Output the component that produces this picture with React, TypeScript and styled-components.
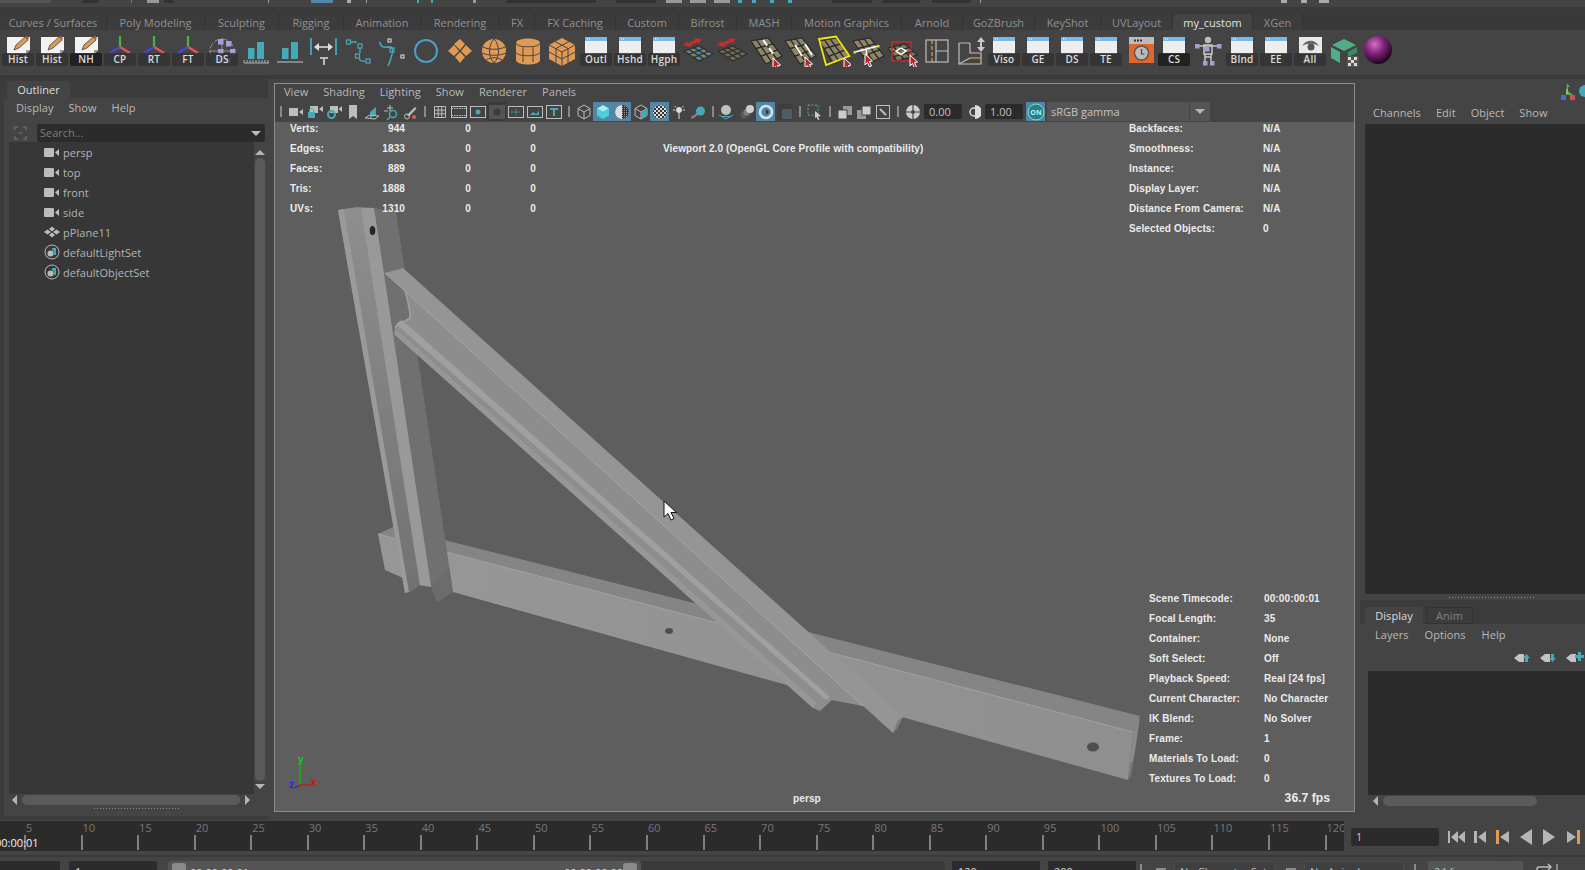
import React from "react";
import styled, { createGlobalStyle } from "styled-components";

const GlobalStyle = createGlobalStyle`
  html, body { margin: 0; padding: 0; background: #444; overflow: hidden; }
  * { box-sizing: border-box; }
`;

const UI_FONT = `"Open Sans", "Noto Sans", sans-serif`;
const HUD_FONT = `"Liberation Sans", Arial, sans-serif`;
const TEAL = "#45a9b8";
const ORANGE = "#e09a55";

const Page = styled.div`
  width: 1585px;
  height: 870px;
  overflow: hidden;
  display: flex;
  flex-direction: column;
  background: #444;
  font-family: ${UI_FONT};
  font-size: 11px;
  color: #bbb;
`;

/* ---- clipped status line ---- */
const StatusStrip = styled.div`
  flex: none;
  height: 8px;
  display: flex;
  align-items: flex-start;
  background: #444;
  border-bottom: 1px solid #3a3a3a;
`;
const StatusBit = styled.div<{ $ml: number; $w: number; $c: string }>`
  margin-left: ${(p) => p.$ml}px;
  width: ${(p) => p.$w}px;
  height: 3px;
  background: ${(p) => p.$c};
`;
const StatusGap = styled.div`
  flex: none;
  height: 6px;
  background: #3a3a3a;
`;

/* ---- shelf tabs ---- */
const TabStrip = styled.div`
  flex: none;
  height: 16px;
  display: flex;
  background: #383838;
`;
const ShelfTab = styled.div<{ $w: number; $active?: boolean }>`
  width: ${(p) => p.$w}px;
  display: flex;
  align-items: center;
  justify-content: center;
  background: ${(p) => (p.$active ? "#444" : "#3c3c3c")};
  color: ${(p) => (p.$active ? "#e2e2e2" : "#909090")};
  border-right: 1px solid #333;
  border-radius: 3px 3px 0 0;
  font-size: 11px;
  white-space: nowrap;
`;

/* ---- shelf ---- */
const Shelf = styled.div`
  flex: none;
  height: 45px;
  display: flex;
  padding-left: 1px;
  background: #444;
`;
const ShelfItem = styled.div`
  position: relative;
  flex: none;
  width: 34px;
  height: 45px;
  padding-top: 3px;
  svg { display: block; }
`;
const ShelfLabel = styled.div<{ $dark?: boolean }>`
  position: absolute;
  left: 1px;
  top: 23px;
  width: 32px;
  height: 13px;
  line-height: 13px;
  text-align: center;
  border-radius: 2px;
  background: ${(p) => (p.$dark ? "rgba(30,30,30,.9)" : "rgba(50,50,50,.85)")};
  color: #dcdcdc;
  font-size: 10px;
  font-weight: 600;
  letter-spacing: 0.2px;
`;
const ShelfGap = styled.div`
  flex: none;
  height: 4px;
  background: #3a3a3a;
`;

/* ---- main area ---- */
const Main = styled.div`
  flex: none;
  height: 741px;
  display: flex;
  background: #444;
`;

/* outliner */
const OutlinerPanel = styled.div`
  flex: none;
  width: 268px;
  display: flex;
  flex-direction: column;
  padding-left: 4px;
  background: #3c3c3c;
`;
const PanelTabs = styled.div`
  flex: none;
  height: 19px;
  display: flex;
  align-items: flex-end;
  padding-left: 3px;
`;
const PanelTab = styled.div<{ $w: number; $active?: boolean }>`
  width: ${(p) => p.$w}px;
  height: 17px;
  margin-right: 3px;
  display: flex;
  align-items: center;
  justify-content: center;
  border-radius: 3px 3px 0 0;
  background: ${(p) => (p.$active ? "#444" : "#3c3c3c")};
  color: ${(p) => (p.$active ? "#ddd" : "#808080")};
  box-shadow: ${(p) => (p.$active ? "none" : "inset 0 0 0 1px #333")};
  font-size: 11px;
  letter-spacing: 0.05px;
`;
const PanelBody = styled.div`
  flex: 1;
  min-height: 0;
  display: flex;
  flex-direction: column;
  background: #444;
  margin-bottom: 4px;
  padding-bottom: 4px;
`;
const MenuBar = styled.div<{ $h?: number; $pl: number; $gap: number }>`
  flex: none;
  height: ${(p) => p.$h ?? 20}px;
  display: flex;
  align-items: center;
  gap: ${(p) => p.$gap}px;
  padding-left: ${(p) => p.$pl}px;
  font-size: 11px;
  letter-spacing: 0.05px;
  color: #b9b9b9;
`;
const FilterRow = styled.div`
  flex: none;
  height: 26px;
  display: flex;
  align-items: flex-end;
  padding: 0 1px 0 9px;
  gap: 9px;
  svg { margin-bottom: 1px; }
`;
const SearchField = styled.div`
  position: relative;
  width: 228px;
  height: 18px;
  line-height: 18px;
  padding-left: 3px;
  border-radius: 2px;
  background: #2b2b2b;
  color: #7d7d7d;
  font-size: 11px;
  &::after {
    content: "";
    position: absolute;
    right: 4px;
    top: 7px;
    border: 5px solid transparent;
    border-top: 5px solid #bbb;
    border-bottom: 0;
  }
`;
const ListArea = styled.div`
  flex: 1;
  min-height: 0;
  display: flex;
  margin: 0 2px 0 5px;
`;
const ListColumn = styled.div`
  flex: 1;
  min-width: 0;
  display: flex;
  flex-direction: column;
  background: #373737;
`;
const TreeList = styled.div`
  flex: 1;
`;
const TreeRow = styled.div`
  height: 20px;
  display: flex;
  align-items: center;
  padding-left: 35px;
  gap: 3px;
  font-size: 11px;
  letter-spacing: 0.05px;
  color: #b4b4b4;
  svg { flex: none; }
`;
const VScroll = styled.div`
  flex: none;
  width: 12px;
  display: flex;
  flex-direction: column;
  align-items: center;
  background: #444;
  padding-bottom: 16px;
`;
const VThumb = styled.div`
  flex: 1;
  width: 10px;
  border-radius: 5px;
  background: #5a5a5a;
`;
const ScrollSpace = styled.div<{ $h: number }>`
  flex: none;
  height: ${(p) => p.$h}px;
`;
const Arrow = styled.div<{ $dir: "up" | "down" | "left" | "right"; $size?: number; $c?: string }>`
  flex: none;
  width: 0;
  height: 0;
  border: ${(p) => p.$size ?? 5}px solid transparent;
  ${(p) => {
    const c = p.$c ?? "#b5b5b5";
    if (p.$dir === "up") return `border-bottom-color:${c};border-top-width:0;`;
    if (p.$dir === "down") return `border-top-color:${c};border-bottom-width:0;`;
    if (p.$dir === "left") return `border-right-color:${c};border-left-width:0;`;
    return `border-left-color:${c};border-right-width:0;`;
  }}
`;
const HScroll = styled.div<{ $pad?: number }>`
  flex: none;
  height: 11px;
  display: flex;
  align-items: center;
  gap: 5px;
  padding: 0 ${(p) => p.$pad ?? 3}px;
  background: #444;
`;
const HThumb = styled.div<{ $w: number }>`
  flex: none;
  width: ${(p) => p.$w}px;
  height: 10px;
  border-radius: 5px;
  background: #5a5a5a;
`;
const DragDots = styled.div<{ $w: number; $ml: number }>`
  flex: none;
  height: 1px;
  width: ${(p) => p.$w}px;
  margin-left: ${(p) => p.$ml}px;
  background: repeating-linear-gradient(90deg, #8a8a8a 0 1px, transparent 1px 3px);
`;
const DragRow = styled.div<{ $h: number }>`
  flex: none;
  height: ${(p) => p.$h}px;
  display: flex;
  align-items: center;
`;

/* viewport pane */
const ViewPane = styled.div`
  flex: none;
  width: 1081px;
  height: 729px;
  margin: 4px 5px 0 6px;
  display: flex;
  flex-direction: column;
  border: 1px solid #8c8c8c;
  background: #444;
`;
const ViewToolbar = styled.div`
  flex: none;
  height: 23px;
  padding-top: 2px;
  display: flex;
  align-items: center;
  svg { display: block; flex: none; }
`;
const ToolSlot = styled.div<{ $active?: boolean; $sel?: boolean; $ml?: number }>`
  flex: none;
  width: 19px;
  height: 19px;
  margin-left: ${(p) => p.$ml ?? 0}px;
  display: flex;
  align-items: center;
  justify-content: center;
  background: ${(p) => (p.$active ? "#5285a6" : p.$sel ? "#3a3a3a" : "transparent")};
`;
const ToolHandle = styled.div`
  flex: none;
  width: 11px;
  height: 17px;
  display: flex;
  justify-content: center;
  &::before {
    content: "";
    width: 2px;
    height: 100%;
    background: linear-gradient(#444 0 3px, #8a8a8a 3px 14px, #444 14px);
  }
`;
const ToolField = styled.div`
  flex: none;
  width: 38px;
  height: 15px;
  margin: 0 2px;
  padding-left: 5px;
  line-height: 15px;
  border-radius: 2px;
  background: #2b2b2b;
  color: #c2c2c2;
  font-size: 11px;
`;
const GammaBox = styled.div`
  flex: none;
  width: 142px;
  height: 19px;
  line-height: 19px;
  margin-left: 2px;
  padding-left: 4px;
  background: #555;
  color: #c4c4c4;
  font-size: 11px;
`;
const GammaArrow = styled.div`
  flex: none;
  width: 20px;
  height: 19px;
  margin-left: 1px;
  display: flex;
  align-items: center;
  justify-content: center;
  background: #555;
`;
const Viewport = styled.div`
  position: relative;
  flex: 1;
  min-height: 0;
  overflow: hidden;
  background: #5e5e5e;
  font-family: ${HUD_FONT};
  font-size: 10px;
  font-weight: 700;
  letter-spacing: 0.12px;
  color: #ececec;
`;
const ModelSvg = styled.svg`
  position: absolute;
  left: 0;
  top: 0;
`;
const HudBlock = styled.div<{ $x: number; $y: number }>`
  position: absolute;
  left: ${(p) => p.$x}px;
  top: ${(p) => p.$y}px;
  white-space: nowrap;
`;
const HudRow = styled.div`
  display: flex;
  height: 20px;
  line-height: 20px;
`;
const HudCell = styled.div<{ $w: number; $right?: boolean }>`
  flex: none;
  width: ${(p) => p.$w}px;
  text-align: ${(p) => (p.$right ? "right" : "left")};
`;
const FpsText = styled.div`
  position: absolute;
  right: 24px;
  bottom: 6px;
  font-size: 12.2px;
  letter-spacing: 0;
`;
const CameraName = styled.div`
  position: absolute;
  left: 518px;
  bottom: 7px;
`;
const Gizmo = styled.svg`
  position: absolute;
  left: 13px;
  bottom: 20px;
`;
const Pointer = styled.svg`
  position: absolute;
  left: 388px;
  top: 378px;
`;

/* right side panel */
const SidePanel = styled.div`
  flex: 1;
  min-width: 0;
  display: flex;
  flex-direction: column;
`;
const SideTop = styled.div`
  flex: none;
  height: 21px;
  display: flex;
  justify-content: flex-end;
  padding: 4px 0 0;
  svg { display: block; }
`;
const SideDark = styled.div<{ $h: number; $ml: number }>`
  flex: none;
  height: ${(p) => p.$h}px;
  margin-left: ${(p) => p.$ml}px;
  background: #2b2b2b;
`;
const SideTabs = styled.div`
  flex: none;
  height: 24px;
  display: flex;
  align-items: flex-end;
  padding-left: 5px;
  background: #3c3c3c;
`;
const LayerTools = styled.div`
  flex: none;
  height: 26px;
  display: flex;
  align-items: center;
  padding-left: 153px;
  gap: 6px;
  svg { display: block; flex: none; }
`;

/* time slider */
const TimeRow = styled.div`
  flex: none;
  height: 34px;
  margin-top: 1px;
  display: flex;
  background: #444;
`;
const Ruler = styled.div`
  position: relative;
  flex: none;
  width: 1344px;
  height: 30px;
  display: flex;
  padding-left: 24px;
  overflow: hidden;
  background: #2b2b2b;
`;
const RulerCell = styled.div`
  flex: none;
  width: 56.55px;
  display: flex;
  flex-direction: column;
`;
const RulerNum = styled.div`
  height: 14px;
  line-height: 14px;
  padding-left: 2px;
  color: #777;
  font-size: 11px;
  white-space: nowrap;
`;
const RulerTick = styled.div`
  width: 2px;
  height: 15px;
  background: #808080;
`;
const CurrentTime = styled.div`
  position: absolute;
  left: -5px;
  top: 14px;
  color: #f2f2f2;
  font-size: 11px;
`;
const FrameField = styled.div`
  flex: none;
  width: 88px;
  height: 18px;
  line-height: 18px;
  margin: 7px 0 0 7px;
  padding-left: 5px;
  border-radius: 2px;
  background: #2b2b2b;
  color: #c6c6c6;
`;
const Transport = styled.div`
  flex: none;
  display: flex;
  height: 31px;
  padding-left: 6px;
`;
const TransportSlot = styled.div`
  flex: none;
  width: 23.2px;
  display: flex;
  align-items: center;
  justify-content: center;
  svg { display: block; flex: none; }
`;
const SepBand = styled.div`
  flex: none;
  height: 2px;
  background: #3a3a3a;
`;

/* range row */
const RangeRow = styled.div`
  flex: none;
  height: 24px;
  margin-top: 4px;
  display: flex;
  background: #444;
  color: #ddd;
`;
const RangeField = styled.div<{ $w: number; $ml: number }>`
  flex: none;
  width: ${(p) => p.$w}px;
  margin-left: ${(p) => p.$ml}px;
  height: 22px;
  line-height: 22px;
  padding-left: 6px;
  border-radius: 2px;
  background: #2b2b2b;
`;
const RangeTrack = styled.div`
  flex: none;
  width: 777px;
  margin-left: 11px;
  height: 22px;
  display: flex;
  border-radius: 3px;
  background: #3a3a3a;
`;
const RangeBar = styled.div`
  flex: none;
  width: 473px;
  height: 22px;
  display: flex;
  justify-content: space-between;
  padding: 2px 4px;
  border-radius: 3px;
  background: #555;
  line-height: 20px;
`;
const RangeKnob = styled.div`
  flex: none;
  width: 14px;
  height: 14px;
  border-radius: 3px;
  background: #8a8a8a;
`;
const RangeTime = styled.div`
  flex: 1;
  padding: 0 4px;
  display: flex;
  justify-content: flex-start;
`;
const RangeDrop = styled.div<{ $w: number; $ml: number; $light?: boolean }>`
  flex: none;
  width: ${(p) => p.$w}px;
  margin-left: ${(p) => p.$ml}px;
  height: 22px;
  line-height: 22px;
  padding-left: 6px;
  border-radius: 2px;
  background: ${(p) => (p.$light ? "#555" : "#3f3f3f")};
  box-shadow: ${(p) => (p.$light ? "none" : "inset 0 0 0 1px #4d4d4d")};
  color: #bdbdbd;
  white-space: nowrap;
`;
const RangeHandle = styled.div<{ $ml: number }>`
  flex: none;
  width: 2px;
  height: 22px;
  margin: 3px 0 0 ${(p) => p.$ml}px;
  background: #8a8a8a;
`;
const RangeMark = styled.div<{ $ml: number }>`
  flex: none;
  width: 10px;
  height: 2px;
  margin: 7px 0 0 ${(p) => p.$ml}px;
  background: #8a8a8a;
`;
const LoopMark = styled.svg<{ $ml: number }>`
  flex: none;
  margin: 2px 0 0 ${(p) => p.$ml}px;
`;

/* ---- icon drawings ---- */
const Note = () => (
  <svg width="34" height="34" viewBox="0 0 34 34">
    <path d="M6 4h23v13l-4 4H6z" fill="#f2f2f2" />
    <path d="M25 21v-4h4z" fill="#999" />
    <path d="M13 17l2-5 9-8 3 3-9 8z" fill="#d89a55" stroke="#444" strokeWidth=".8" />
    <path d="M24 4l3 3 1-2-2-2z" fill="#c85050" />
  </svg>
);
const AxisIcon = () => (
  <svg width="34" height="34" viewBox="0 0 34 34">
    <path d="M17 3v11" stroke="#3dbb3d" strokeWidth="2.2" />
    <path d="M17 14l10 6" stroke="#e05555" strokeWidth="2.4" />
    <path d="M17 14L7 20" stroke="#4646d8" strokeWidth="2.4" />
  </svg>
);
const DsIcon = () => (
  <svg width="34" height="34" viewBox="0 0 34 34">
    <circle cx="17" cy="18" r="12" fill="none" stroke="#8e8e8e" strokeDasharray="6 2" />
    <path d="M4 18h26M17 5v26" stroke="#8e8e8e" />
    {[[13, 6], [21, 8], [13, 16], [25, 16], [13, 25], [20, 25]].map(([x, y], i) => (
      <rect key={i} x={x} y={y} width="5.5" height="5.5" fill="#a99bdc" />
    ))}
  </svg>
);
const BarsIcon = ({ ruler }: { ruler?: boolean }) => (
  <svg width="34" height="34" viewBox="0 0 34 34">
    <rect x="9" y="15" width="6.5" height="11" fill={TEAL} />
    <rect x="18" y="9" width="7" height="17" fill={TEAL} />
    {ruler ? (
      <path d="M5 30h25M5 27v3M8 27v3M11 27v3M14 27v3M17 27v3M20 27v3M23 27v3M26 27v3M29 27v3" stroke="#b8b8b8" strokeWidth=".9" />
    ) : (
      <path d="M4 29h26" stroke="#c8c8c8" />
    )}
  </svg>
);
const MeasureIcon = () => (
  <svg width="34" height="34" viewBox="0 0 34 34">
    <path d="M4 5v17M29 5v17" stroke={TEAL} strokeWidth="1.8" />
    <path d="M9 14h15" stroke="#ddd" strokeWidth="1.6" />
    <path d="M12 10l-5 4 5 4zM21 10l5 4-5 4z" fill="#ddd" />
    <path d="M13 24h8v2h-3v6h-2v-6h-3z" fill="#bbb" />
  </svg>
);
const CurveIcon = ({ alt }: { alt?: boolean }) => (
  <svg width="34" height="34" viewBox="0 0 34 34" fill="none" stroke={TEAL} strokeWidth="1.2">
    {alt ? (
      <>
        <path d="M5 9c0 7 7 5 11 5 4 2 0 12-3 19" strokeWidth="1.6" />
        <rect x="15" y="15" width="4" height="4" />
        <rect x="26" y="22" width="3" height="3" stroke="#ccc" />
        <rect x="13" y="6" width="3" height="3" stroke="#ccc" />
      </>
    ) : (
      <>
        <rect x="5.500" y="7" width="4" height="4" />
        <rect x="17" y="11" width="4" height="4" />
        <rect x="14.500" y="21" width="4" height="4" />
        <rect x="25" y="26" width="4" height="4" />
        <path d="M10 9h6M19 15v5M18 26c2 2 4 3 6 2" strokeWidth="1.4" />
      </>
    )}
  </svg>
);
const RingIcon = () => (
  <svg width="34" height="34" viewBox="0 0 34 34">
    <circle cx="17" cy="18" r="11" fill="none" stroke="#4b9fc6" strokeWidth="2" />
  </svg>
);
const DiamondIcon = () => (
  <svg width="34" height="34" viewBox="0 0 34 34" fill={ORANGE}>
    <path d="M17 6l5 5-5 6-6-6zM23 12l6 6-6 5-5-5zM11 12l5 6-5 5-6-5zM17 19l5 5-5 6-5-6z" />
  </svg>
);
const SphereIcon = () => (
  <svg width="34" height="34" viewBox="0 0 34 34">
    <circle cx="17" cy="18" r="12" fill={ORANGE} />
    <path d="M6 14c6 3 16 3 22 0M5 20c7 3 17 3 24 0M9 27c5-3 11-3 16 0M17 6c-6 6-6 18 0 24M17 6c6 6 6 18 0 24" fill="none" stroke="#444" />
  </svg>
);
const CylIcon = () => (
  <svg width="34" height="34" viewBox="0 0 34 34">
    <path d="M5 10c0-6 24-6 24 0v17c0 6-24 6-24 0z" fill={ORANGE} />
    <path d="M5 10c0 5 24 5 24 0M5 19c0 5 24 5 24 0M12 14v15M22 14v15" fill="none" stroke="#444" />
  </svg>
);
const CubeIcon = () => (
  <svg width="34" height="34" viewBox="0 0 34 34">
    <path d="M17 5l13 7v14l-13 7-13-7V12z" fill={ORANGE} />
    <path d="M4 12l13 7 13-7M17 19v14M10 8.500l13 7v14M24 8.500l-13 7v14M4 19l13 7 13-7" fill="none" stroke="#444" />
  </svg>
);
const WindowIcon = () => (
  <svg width="34" height="34" viewBox="0 0 34 34">
    <rect x="6" y="4" width="22" height="17" fill="#eee" />
    <rect x="6" y="4" width="22" height="4" fill="#79b8e8" />
    <path d="M8 6h4" stroke="#fff" strokeDasharray="1 1" />
  </svg>
);

type Pt = [number, number];
const QuadGrid = ({ c, n, fill, line }: { c: Pt[]; n: number; fill: string | string[]; line: string }) => {
  const at = (u: number, v: number): Pt => {
    const tx = c[0][0] + (c[1][0] - c[0][0]) * u;
    const ty = c[0][1] + (c[1][1] - c[0][1]) * u;
    const bx = c[3][0] + (c[2][0] - c[3][0]) * u;
    const by = c[3][1] + (c[2][1] - c[3][1]) * u;
    return [tx + (bx - tx) * v, ty + (by - ty) * v];
  };
  const cells = [];
  for (let i = 0; i < n; i++) {
    for (let j = 0; j < n; j++) {
      const pts = [at(i / n, j / n), at((i + 1) / n, j / n), at((i + 1) / n, (j + 1) / n), at(i / n, (j + 1) / n)];
      const f = Array.isArray(fill) ? fill[(i + j) % fill.length] : fill;
      cells.push(<polygon key={`${i}-${j}`} points={pts.map((p) => p.join(",")).join(" ")} fill={f} stroke={line} strokeWidth="1.2" />);
    }
  }
  return <g>{cells}</g>;
};
const RedCursor = ({ x, y }: { x: number; y: number }) => (
  <path transform={`translate(${x} ${y})`} d="M0 0l7.500 7-3 .5 2 4.500-2 1-2-4.500-2.500 2.500z" fill="#b52a2a" stroke="#fff" strokeWidth="1" />
);
const OLIVE = "#8d8565";

const MoveGridIcon = ({ dim }: { dim?: boolean }) => (
  <svg width="34" height="34" viewBox="0 0 34 34">
    <QuadGrid
      c={[[3, 18], [18, 13], [32, 21], [18, 28]]}
      n={3}
      fill={dim ? "#6e6a55" : ["#4f86ad", "#84815f"]}
      line="#2f2f2f"
    />
    <path d="M2 12l5-4v2l7-3V5l7 1-4 5v-2l-7 3v2z" fill="#c62d2d" />
  </svg>
);
const QuadIcon = ({ kind }: { kind: number }) => {
  const cursor: Pt = [[24, 25], [22, 24], [27, 25], [14, 21]][kind] as Pt;
  return (
    <svg width="34" height="34" viewBox="0 0 34 34">
      <QuadGrid c={[[2, 8], [19, 5], [33, 23], [17, 31]]} n={3} fill={OLIVE} line="#2a2a2a" />
      {kind === 0 && <path d="M14 7l12 16" stroke="#fff" strokeWidth="2" strokeDasharray="7 3" />}
      {kind === 1 && <path d="M12 12l7 11M22 11l7 11" stroke="#fff" strokeWidth="1.8" />}
      {kind === 2 && <path d="M2 6l17-2.500L32.500 23 9 32z" fill="none" stroke="#f0e800" strokeWidth="1.8" />}
      {kind === 3 && (
        <>
          <path d="M4 19l23-6M15 16l1 6" stroke="#fff" strokeWidth="1.6" />
          <rect x="2.500" y="18" width="2.500" height="2.500" fill="#f0e800" />
          <rect x="26" y="12" width="2.500" height="2.500" fill="#f0e800" />
        </>
      )}
      <RedCursor x={cursor[0]} y={cursor[1]} />
    </svg>
  );
};
const FaceSelectIcon = () => (
  <svg width="34" height="34" viewBox="0 0 34 34">
    <QuadGrid c={[[3, 15], [20, 11], [32, 22], [12, 28]]} n={3} fill="#7e7759" line="#2a2a2a" />
    <rect x="7" y="9" width="19" height="19" fill="none" stroke="#d92a2a" strokeWidth="1.2" />
    <path d="M16 15l5 3-5 3.500-5-3.500z" fill="none" stroke="#fff" strokeWidth="1.5" />
    <RedCursor x={25} y={22} />
  </svg>
);
const PanelsIcon = ({ up }: { up?: boolean }) => (
  <svg width="34" height="34" viewBox="0 0 34 34" fill="none" stroke="#bdbdbd" strokeWidth="1.2">
    {up ? (
      <>
        <path d="M6 10h11M6 10v21h22V20H17V10" />
        <path d="M17 25h11" stroke={ORANGE} />
        <path d="M6 31l11-6" />
        <path d="M24 9l4-5 4 5zM24 14l4 5 4-5z" fill="#c8c8c8" stroke="none" />
        <rect x="27" y="8" width="2" height="7" fill="#c8c8c8" stroke="none" />
      </>
    ) : (
      <>
        <rect x="7" y="7" width="22" height="22" />
        <path d="M17 7v22M17 18h12" />
        <path d="M13 7v22" stroke={ORANGE} strokeDasharray="4 2" />
      </>
    )}
  </svg>
);
const ClockIcon = () => (
  <svg width="34" height="34" viewBox="0 0 34 34">
    <rect x="6" y="4" width="25" height="26" fill="#e0662e" />
    <rect x="6" y="4" width="25" height="7" fill="#bbb" />
    <path d="M11 7.500h8" stroke="#333" strokeDasharray="2 1" strokeWidth="2" />
    <circle cx="18.500" cy="20" r="7" fill="#bbb" stroke="#555" strokeWidth="1.4" />
    <path d="M18.500 16v5h3" fill="none" stroke="#444" strokeWidth="1.2" />
  </svg>
);
const FigureIcon = () => (
  <svg width="34" height="34" viewBox="0 0 34 34">
    <circle cx="17" cy="7" r="3.200" fill="#bbb" />
    <path d="M7 13h20" stroke="#ccc" strokeWidth="1.4" />
    <path d="M13 12h8v9h-8zM14 21v7M20 21v7M14 24h6" fill="none" stroke="#ccc" strokeWidth="1.4" />
    {[[4, 11], [26, 11], [14, 14], [12, 28], [19, 28]].map(([x, y], i) => (
      <rect key={i} x={x} y={y} width="4.500" height="4.500" fill="#a99bdc" />
    ))}
  </svg>
);
const EyeIcon = () => (
  <svg width="34" height="34" viewBox="0 0 34 34">
    <rect x="6" y="4" width="23" height="17" fill="#e9e9e9" />
    <path d="M9 13c4-7 13-7 17 0-5-3-12-3-17 0z" fill="#666" />
    <circle cx="18" cy="14" r="3.500" fill="#555" />
  </svg>
);
const GreenCubeIcon = () => (
  <svg width="34" height="34" viewBox="0 0 34 34">
    <path d="M17 6l12 6-12 6-12-6z" fill="#4fae86" />
    <path d="M4 14l9 5v11l-9-5z" fill="#4fae86" />
    <path d="M21 19l9-5v6l-9 4z" fill="#3a8a68" />
    <rect x="20" y="23" width="12" height="12" fill="#555" />
    <path d="M21 24h3v3h-3zM27 24h3v3h-3zM24 27h3v3h-3zM21 30h3v3h-3zM27 30h3v3h-3z" fill="#ddd" />
  </svg>
);
const BallIcon = () => (
  <svg width="34" height="34" viewBox="0 0 34 34">
    <defs>
      <radialGradient id="ball" cx="38%" cy="30%" r="70%">
        <stop offset="0" stopColor="#d070c0" />
        <stop offset=".5" stopColor="#7c1f78" />
        <stop offset="1" stopColor="#1c0a1c" />
      </radialGradient>
    </defs>
    <circle cx="17" cy="17" r="14" fill="url(#ball)" />
  </svg>
);

const CameraGlyph = () => (
  <svg width="16" height="11" viewBox="0 0 16 11" fill="#bdbdbd">
    <rect x="0" y="1" width="10" height="9" rx="1" />
    <path d="M11 5.500L15 2v7z" />
  </svg>
);
const SetGlyph = () => (
  <svg width="16" height="16" viewBox="0 0 16 16">
    <circle cx="8" cy="8" r="7" fill="none" stroke="#bbb" />
    <circle cx="6.500" cy="9.500" r="3" fill="#bbb" />
    <path d="M8 4h4v7H9.500V6.500H8z" fill={TEAL} />
  </svg>
);
const MeshGlyph = () => (
  <svg width="16" height="16" viewBox="0 0 16 16" fill="#bbb">
    <path d="M8 2.500l3 2.500-3 2.500L5 5zM3.500 5.500L7 8l-3.500 2.500L0 8zM12.500 5.500L16 8l-3.500 2.500L9 8zM8 8.500l3 2.500-3 2.500L5 11z" />
  </svg>
);

type ToolName = string;
const ToolGlyph = ({ name }: { name: ToolName }) => {
  const stroke = "#bdbdbd";
  switch (name) {
    case "cam":
      return <svg width="16" height="16" viewBox="0 0 16 16" fill={stroke}><rect x="1" y="4" width="9" height="8" /><path d="M11 8l4-3v6z" /></svg>;
    case "camLock":
      return <svg width="16" height="16" viewBox="0 0 16 16" fill={stroke}><rect x="3" y="2" width="8" height="7" /><path d="M12 5l4-3v6z" /><rect x="1" y="8" width="7" height="6" fill={TEAL} /><path d="M2.500 8V6.500a2 2 0 014 0V8" fill="none" stroke={TEAL} /></svg>;
    case "camGear":
      return <svg width="16" height="16" viewBox="0 0 16 16" fill={stroke}><rect x="4" y="2" width="8" height="7" /><path d="M12.500 5l3.500-3v6z" /><circle cx="5.500" cy="10.500" r="3.500" fill="none" stroke={TEAL} strokeWidth="2" /></svg>;
    case "bookmark":
      return <svg width="16" height="16" viewBox="0 0 16 16" fill={stroke}><path d="M4 1h8v14l-4-3-4 3z" /></svg>;
    case "pan":
      return <svg width="16" height="16" viewBox="0 0 16 16"><path d="M6 8l6-5v8l-6 3z" fill={TEAL} /><path d="M1 14l5-3 9 1-4 3z" fill="none" stroke={stroke} /></svg>;
    case "zoom":
      return <svg width="16" height="16" viewBox="0 0 16 16" fill="none"><circle cx="10" cy="10" r="3.500" stroke={TEAL} strokeWidth="1.500" /><path d="M7 13l-3 3" stroke={TEAL} strokeWidth="1.500" /><path d="M7 1v6M4 4h6M1 7h4" stroke={stroke} /></svg>;
    case "brush":
      return <svg width="16" height="16" viewBox="0 0 16 16" fill="none"><path d="M5 11L13 3l1.500 1.500L7 12.500z" fill={stroke} /><circle cx="5" cy="12.500" r="2.500" stroke={stroke} /><circle cx="12" cy="13" r="2" fill="#c86a45" /></svg>;
    case "grid":
      return <svg width="14" height="14" viewBox="0 0 14 14" fill="none" stroke={stroke}><path d="M1.500 1.500h11v11h-11zM5.200 1.500v11M8.800 1.500v11M1.500 5.200h11M1.500 8.800h11" /></svg>;
    case "film":
      return <svg width="16" height="14" viewBox="0 0 16 14" fill="none" stroke={stroke}><rect x=".5" y="1.500" width="15" height="11" /><path d="M.5 3.500h15M.5 10.500h15" strokeDasharray="1.500 1" /></svg>;
    case "res":
      return <svg width="16" height="14" viewBox="0 0 16 14" fill="none" stroke={stroke}><rect x=".5" y="1.500" width="15" height="11" /><circle cx="8" cy="7" r="2.500" fill={TEAL} stroke="none" /></svg>;
    case "mask":
      return <svg width="16" height="14" viewBox="0 0 16 14"><rect x="0" y="0" width="16" height="14" fill="#555" /><circle cx="8" cy="7" r="3.500" fill="#3c3c3c" /></svg>;
    case "safe":
      return <svg width="16" height="14" viewBox="0 0 16 14" fill="none"><rect x=".5" y="1.500" width="15" height="11" stroke={stroke} /><path d="M3 7h10M8 4v6" stroke={TEAL} strokeDasharray="1.500 1" /></svg>;
    case "field":
      return <svg width="16" height="14" viewBox="0 0 16 14" fill="none"><rect x=".5" y="1.500" width="15" height="11" stroke={stroke} /><path d="M2 11l4-4 3 2 3-3v4H2z" fill={TEAL} /></svg>;
    case "text":
      return <svg width="16" height="14" viewBox="0 0 16 14" fill="none"><rect x=".5" y=".5" width="15" height="13" stroke={stroke} /><path d="M4 3h8v2H9v6H7V5H4z" fill={TEAL} /></svg>;
    case "wire":
      return <svg width="16" height="16" viewBox="0 0 16 16" fill="none" stroke={stroke}><path d="M8 1l6 3.500v7L8 15l-6-3.500v-7zM2 4.500L8 8l6-3.500M8 8v7" /></svg>;
    case "solid":
      return <svg width="16" height="16" viewBox="0 0 16 16"><path d="M8 1l6 3.500L8 8 2 4.500z" fill="#a8f0f0" /><path d="M2 4.500L8 8v7l-6-3.500zM14 4.500L8 8v7l6-3.500z" fill="#4fd0d8" /></svg>;
    case "shade":
      return (
        <svg width="16" height="16" viewBox="0 0 16 16">
          <defs><pattern id="dots" width="2" height="2" patternUnits="userSpaceOnUse"><rect width="2" height="2" fill="#333" /><rect width="1" height="1" fill="#999" /></pattern></defs>
          <circle cx="8" cy="8" r="7" fill="url(#dots)" />
          <path d="M8 1a7 7 0 000 14z" fill="#ddd" />
        </svg>
      );
    case "shadeCube":
      return <svg width="16" height="16" viewBox="0 0 16 16" fill="none" stroke={stroke}><path d="M8 1l6 3.500v7L8 15l-6-3.500v-7zM2 4.500L8 8l6-3.500M8 8v7" /><path d="M8 8l6-3.500v7L8 15z" fill={TEAL} stroke="none" /></svg>;
    case "checker":
      return (
        <svg width="16" height="16" viewBox="0 0 16 16">
          <defs><pattern id="chk" width="4" height="4" patternUnits="userSpaceOnUse"><rect width="4" height="4" fill="#333" /><rect width="2" height="2" fill="#ddd" /><rect x="2" y="2" width="2" height="2" fill="#ddd" /></pattern></defs>
          <circle cx="8" cy="8" r="7" fill="url(#chk)" />
        </svg>
      );
    case "light":
      return <svg width="16" height="16" viewBox="0 0 16 16" fill="none" stroke="#ddd"><circle cx="8" cy="6" r="2.500" fill="#ddd" /><path d="M8 9v4M7 14h2M2 6h2M12 6h2M3.500 2l1.500 1.500M12.500 2L11 3.500" /></svg>;
    case "shadow":
      return <svg width="16" height="16" viewBox="0 0 16 16"><circle cx="10.500" cy="7" r="4.500" fill={TEAL} /><path d="M1 13l6-4 1 2-6 4z" fill="#888" /></svg>;
    case "ground":
      return <svg width="16" height="16" viewBox="0 0 16 16"><circle cx="8" cy="6" r="5" fill="#c0c0c0" /><path d="M1 11l7 4 7-4M3 12.500h10" fill="none" stroke={TEAL} /></svg>;
    case "ghost":
      return <svg width="16" height="16" viewBox="0 0 16 16"><circle cx="5" cy="11" r="3.500" fill="#5a5a5a" /><circle cx="8" cy="8" r="3.500" fill="#7c7c7c" /><circle cx="11" cy="5" r="4" fill="#d0d0d0" /></svg>;
    case "dof":
      return <svg width="16" height="16" viewBox="0 0 16 16"><circle cx="8" cy="8" r="6" fill="none" stroke="#cfe6f0" strokeWidth="2.500" /><path d="M8 5l3 3-3 3z" fill="#333" /></svg>;
    case "dim":
      return <svg width="18" height="18" viewBox="0 0 18 18"><rect width="18" height="18" fill="#3e3e3e" stroke="#505050" /><rect x="6" y="6" width="10" height="10" fill="#4c5e62" /></svg>;
    case "select":
      return <svg width="16" height="16" viewBox="0 0 16 16" fill="none"><rect x="1" y="1" width="10" height="10" stroke={TEAL} strokeDasharray="2 1.500" /><path d="M8 7l6 5-3 .5 1.500 3-1.500.5-1.500-3L8 14z" fill="#ccc" /></svg>;
    case "iso1":
      return <svg width="16" height="16" viewBox="0 0 16 16"><rect x="6" y="2" width="9" height="9" fill="#999" /><rect x="1" y="6" width="9" height="9" fill="#ccc" stroke="#444" /></svg>;
    case "iso2":
      return <svg width="16" height="16" viewBox="0 0 16 16"><rect x="1" y="6" width="9" height="9" fill="#999" /><rect x="6" y="2" width="9" height="9" fill="#ccc" stroke="#444" /></svg>;
    case "iso3":
      return <svg width="16" height="16" viewBox="0 0 16 16" fill="none" stroke={stroke}><rect x="1.500" y="1.500" width="13" height="13" /><path d="M5 5l6 6" strokeWidth="2" /></svg>;
    case "aperture":
      return <svg width="16" height="16" viewBox="0 0 16 16"><circle cx="8" cy="8" r="7" fill="#ccc" /><path d="M8 1v5M15 8h-5M8 15v-5M1 8h5" stroke="#444" strokeWidth="1.200" /><circle cx="8" cy="8" r="2" fill="#444" /></svg>;
    case "half":
      return <svg width="14" height="16" viewBox="0 0 14 16"><path d="M8 1a7 7 0 010 14z" fill="#ddd" /><circle cx="7" cy="8" r="4" fill="none" stroke="#ddd" strokeWidth="1.500" /></svg>;
    default:
      return (
        <svg width="18" height="18" viewBox="0 0 18 18">
          <circle cx="9" cy="9" r="8" fill="#2c7f8a" stroke="#8fd" strokeWidth=".8" />
          <text x="9" y="11.500" textAnchor="middle" fontSize="7" fontWeight="700" fill="#b8f0f0">ON</text>
        </svg>
      );
  }
};

const TransportIcon = ({ kind }: { kind: string }) => {
  const c = "#b5b5b5";
  if (kind === "first")
    return <svg width="20" height="14" viewBox="0 0 20 14" fill={c}><rect x="1" y="1" width="2" height="12" /><path d="M11 1v12L4 7zM18 1v12l-7-6z" /></svg>;
  if (kind === "prev")
    return <svg width="14" height="14" viewBox="0 0 14 14" fill={c}><rect x="1" y="1" width="3" height="12" /><path d="M13 1v12L5 7z" /></svg>;
  if (kind === "prevKey")
    return <svg width="14" height="16" viewBox="0 0 14 16"><rect x="0" y="1" width="3" height="14" fill={ORANGE} /><path fill={c} d="M13 2v12L4 8z" /></svg>;
  if (kind === "back")
    return <svg width="14" height="18" viewBox="0 0 14 18" fill={c}><path d="M13 1v16L1 9z" /></svg>;
  if (kind === "play")
    return <svg width="14" height="18" viewBox="0 0 14 18" fill={c}><path d="M1 1v16l12-8z" /></svg>;
  return <svg width="14" height="16" viewBox="0 0 14 16"><path fill={c} d="M1 2v12l9-6z" /><rect x="11" y="1" width="3" height="14" fill={ORANGE} /></svg>;
};

const LayerArrow = ({ down, plus }: { down?: boolean; plus?: boolean }) => (
  <svg width="20" height="12" viewBox="0 0 20 12">
    <path d="M1 6l5-4h5v8H6z" fill="#c4c4c4" />
    {plus ? (
      <path d="M13 0h3v3h3v3h-3v3h-3V6h-3V3h3z" fill={TEAL} />
    ) : down ? (
      <path d="M12 2h3v4h2l-3.500 4L10 6h2z" fill={TEAL} />
    ) : (
      <path d="M13.500 2L17 6h-2v4h-3V6h-2z" fill={TEAL} />
    )}
  </svg>
);

/* the steel bracket, drawn in page coordinates */
const BracketModel = () => (
  <ModelSvg width="1079" height="691" viewBox="275 122 1079 691">
    <defs>
      <linearGradient id="beamFront" x1="0" y1="0" x2="1" y2="0">
        <stop offset="0" stopColor="#979797" />
        <stop offset="1" stopColor="#8f8f8f" />
      </linearGradient>
      <linearGradient id="uprightBand" gradientUnits="userSpaceOnUse" x1="0" y1="210" x2="0" y2="590">
        <stop offset="0" stopColor="#8e8e8e" />
        <stop offset="1" stopColor="#727272" />
      </linearGradient>
      <filter id="soft" x="-2%" y="-2%" width="104%" height="104%">
        <feGaussianBlur stdDeviation=".55" />
      </filter>
    </defs>
    <g filter="url(#soft)">
      {/* lower beam */}
      <polygon points="378,534 393,527 1140,716 1133,732" fill="#858585" />
      <polygon points="378,534 1133,732 1128,780 453,592 403,578 385,570" fill="url(#beamFront)" />
      <polygon points="1140,716 1133,732 1128,780 1133,762 1136,745" fill="#8a8a8a" />
      <path d="M378 534L1133 732" stroke="#a3a3a3" strokeWidth="1" />
      <polygon points="1131,762 1133,762 1131,776 1128,780" fill="#777" />
      <ellipse cx="669" cy="631" rx="4" ry="3" fill="#505050" />
      <ellipse cx="1093" cy="747" rx="6" ry="4.500" fill="#505050" />

      {/* upright back flange */}
      <polygon points="374,208 396,212 453,592 437,602 431,587" fill="#707070" />
      {/* upright front */}
      <polygon points="338,210 357,207 374,208 431,587 418,585 409,592 405,593" fill="#8a8a8a" />
      <polygon points="338,210 344,209 409,592 405,593" fill="#9a9a9a" />
      <polygon points="344,209 361,208 420,585 413,590 409,592" fill="url(#uprightBand)" />
      <polygon points="361,208 374,208 431,587 420,585" fill="#999" />
      <polygon points="431,587 437,602 453,592 449,566" fill="#6c6c6c" />
      <ellipse cx="372.500" cy="230.500" rx="2.800" ry="4.500" fill="#262626" />

      {/* diagonal arm */}
      <polygon points="405,291 410,318 395,327 394,334 813,708 820,711 832,700 863,706" fill="#8d8d8d" />
      <polygon points="396,324 402,320 830,697 826,700" fill="#a0a0a0" />
      <polygon points="394,334 397,330 817,703 813,708" fill="#979797" />
      <polygon points="403,268 385,273 893,733 903,717" fill="#959595" />
      <polygon points="893,733 897,729 903,717 898,720" fill="#7d7d7d" />
      <path d="M385 273L863 706" stroke="#a8a8a8" strokeWidth="1" />
      <path d="M405 291c3 10 6 20 5 27l-15 9" fill="none" stroke="#a0a0a0" strokeWidth="1.500" />
    </g>
  </ModelSvg>
);

/* ---- data ---- */
const statusBits: [number, number, string][] = [
  [0, 50, "#555"], [32, 16, "#333"], [33, 1, "#777"], [15, 12, "#999"], [5, 10, "#333"], [94, 1, "#999"],
  [42, 22, "#5285a6"], [14, 4, "#aaa"], [15, 1, "#999"], [50, 2, "#45a9b8"], [12, 2, "#45a9b8"], [40, 3, "#999"],
  [30, 90, "#333"], [20, 40, "#333"], [10, 16, "#999"], [8, 16, "#999"], [8, 16, "#999"], [8, 4, "#45a9b8"], [10, 4, "#45a9b8"],
  [14, 4, "#45a9b8"], [14, 4, "#45a9b8"], [40, 40, "#333"], [10, 38, "#333"], [12, 38, "#333"], [10, 1, "#999"],
  [300, 6, "#aaa"], [14, 6, "#aaa"], [12, 10, "#aaa"]
];

const tabs: [string, number][] = [
  ["Curves / Surfaces", 107], ["Poly Modeling", 98], ["Sculpting", 74], ["Rigging", 65], ["Animation", 77],
  ["Rendering", 79], ["FX", 35], ["FX Caching", 81], ["Custom", 63], ["Bifrost", 58], ["MASH", 55],
  ["Motion Graphics", 110], ["Arnold", 61], ["GoZBrush", 72], ["KeyShot", 66], ["UVLayout", 72], ["my_custom", 80], ["XGen", 50]
];

type ShelfEntry = { icon: React.ReactNode; label?: string; dark?: boolean };
const win = (label: string, dark?: boolean): ShelfEntry => ({ icon: <WindowIcon />, label, dark });
const shelfItems: ShelfEntry[] = [
  { icon: <Note />, label: "Hist" },
  { icon: <Note />, label: "Hist" },
  { icon: <Note />, label: "NH", dark: true },
  { icon: <AxisIcon />, label: "CP" },
  { icon: <AxisIcon />, label: "RT" },
  { icon: <AxisIcon />, label: "FT" },
  { icon: <DsIcon />, label: "DS" },
  { icon: <BarsIcon ruler /> },
  { icon: <BarsIcon /> },
  { icon: <MeasureIcon /> },
  { icon: <CurveIcon /> },
  { icon: <CurveIcon alt /> },
  { icon: <RingIcon /> },
  { icon: <DiamondIcon /> },
  { icon: <SphereIcon /> },
  { icon: <CylIcon /> },
  { icon: <CubeIcon /> },
  win("Outl"),
  win("Hshd"),
  win("Hgph"),
  { icon: <MoveGridIcon /> },
  { icon: <MoveGridIcon dim /> },
  { icon: <QuadIcon kind={0} /> },
  { icon: <QuadIcon kind={1} /> },
  { icon: <QuadIcon kind={2} /> },
  { icon: <QuadIcon kind={3} /> },
  { icon: <FaceSelectIcon /> },
  { icon: <PanelsIcon /> },
  { icon: <PanelsIcon up /> },
  win("Viso"),
  win("GE"),
  win("DS"),
  win("TE"),
  { icon: <ClockIcon /> },
  win("CS", true),
  { icon: <FigureIcon /> },
  win("Blnd"),
  win("EE"),
  { icon: <EyeIcon />, label: "All" },
  { icon: <GreenCubeIcon /> },
  { icon: <BallIcon /> }
];

const treeItems: [string, React.ReactNode][] = [
  ["persp", <CameraGlyph />], ["top", <CameraGlyph />], ["front", <CameraGlyph />], ["side", <CameraGlyph />],
  ["pPlane11", <MeshGlyph />], ["defaultLightSet", <SetGlyph />], ["defaultObjectSet", <SetGlyph />]
];

const statsLeft: [string, string][] = [
  ["Verts:", "944"], ["Edges:", "1833"], ["Faces:", "889"], ["Tris:", "1888"], ["UVs:", "1310"]
];
const statsRight: [string, string][] = [
  ["Backfaces:", "N/A"], ["Smoothness:", "N/A"], ["Instance:", "N/A"], ["Display Layer:", "N/A"],
  ["Distance From Camera:", "N/A"], ["Selected Objects:", "0"]
];
const statsBottom: [string, string][] = [
  ["Scene Timecode:", "00:00:00:01"], ["Focal Length:", "35"], ["Container:", "None"], ["Soft Select:", "Off"],
  ["Playback Speed:", "Real [24 fps]"], ["Current Character:", "No Character"], ["IK Blend:", "No Solver"],
  ["Frame:", "1"], ["Materials To Load:", "0"], ["Textures To Load:", "0"]
];

const toolGroups: { name: string; active?: boolean; sel?: boolean; ml?: number }[][] = [
  [{ name: "cam" }, { name: "camLock" }, { name: "camGear" }, { name: "bookmark" }, { name: "pan" }, { name: "zoom" }, { name: "brush" }],
  [{ name: "grid" }, { name: "film" }, { name: "res" }, { name: "mask", sel: true }, { name: "safe" }, { name: "field" }, { name: "text" }],
  [{ name: "wire" }, { name: "solid", active: true }, { name: "shade", active: true }, { name: "shadeCube" }, { name: "checker", active: true }, { name: "light" }, { name: "shadow" }],
  [{ name: "ground", ml: -2 }, { name: "ghost", ml: 2 }, { name: "dof", active: true }, { name: "dim" }],
  [{ name: "select" }],
  [{ name: "iso1" }, { name: "iso2" }, { name: "iso3" }]
];

const rulerFrames = Array.from({ length: 24 }, (_, i) => (i + 1) * 5);
const transportKinds = ["first", "prev", "prevKey", "back", "play", "nextKey"];

export default function App() {
  return (
    <Page>
      <GlobalStyle />
      <StatusStrip>
        {statusBits.map(([ml, w, c], i) => (
          <StatusBit key={i} $ml={ml} $w={w} $c={c} />
        ))}
      </StatusStrip>
      <StatusGap />
      <TabStrip>
        {tabs.map(([name, w]) => (
          <ShelfTab key={name} $w={w} $active={name === "my_custom"}>{name}</ShelfTab>
        ))}
      </TabStrip>
      <Shelf>
        {shelfItems.map((item, i) => (
          <ShelfItem key={i}>
            {item.icon}
            {item.label && <ShelfLabel $dark={item.dark}>{item.label}</ShelfLabel>}
          </ShelfItem>
        ))}
      </Shelf>
      <ShelfGap />

      <Main>
        <OutlinerPanel>
          <PanelTabs>
            <PanelTab $w={63} $active>Outliner</PanelTab>
          </PanelTabs>
          <PanelBody>
            <MenuBar $h={18} $pl={12} $gap={15}>
              <span>Display</span>
              <span>Show</span>
              <span>Help</span>
            </MenuBar>
            <FilterRow>
              <svg width="15" height="16" viewBox="0 0 15 16" fill="none" stroke="#5f5f5f" strokeWidth="2">
                <path d="M2 5V2h3M10 2h3v3M13 11v3h-3M5 14H2v-3M6 8h3" />
              </svg>
              <SearchField>Search...</SearchField>
            </FilterRow>
            <ListArea>
              <ListColumn>
                <TreeList>
                  {treeItems.map(([name, icon]) => (
                    <TreeRow key={name}>{icon}<span>{name}</span></TreeRow>
                  ))}
                </TreeList>
                <HScroll>
                  <Arrow $dir="left" />
                  <HThumb $w={218} />
                  <Arrow $dir="right" />
                </HScroll>
              </ListColumn>
              <VScroll>
                <ScrollSpace $h={8} />
                <Arrow $dir="up" />
                <ScrollSpace $h={3} />
                <VThumb />
                <ScrollSpace $h={3} />
                <Arrow $dir="down" />
              </VScroll>
            </ListArea>
            <DragRow $h={7}>
              <DragDots $w={85} $ml={90} />
            </DragRow>
          </PanelBody>
        </OutlinerPanel>

        <ViewPane>
          <MenuBar $h={15} $pl={9} $gap={15}>
            <span>View</span>
            <span>Shading</span>
            <span>Lighting</span>
            <span>Show</span>
            <span>Renderer</span>
            <span>Panels</span>
          </MenuBar>
          <ViewToolbar>
            {toolGroups.map((group, gi) => (
              <React.Fragment key={gi}>
                <ToolHandle />
                {group.map((t) => (
                  <ToolSlot key={t.name} $active={t.active} $sel={t.sel} $ml={t.ml}>
                    <ToolGlyph name={t.name} />
                  </ToolSlot>
                ))}
              </React.Fragment>
            ))}
            <ToolHandle />
            <ToolSlot><ToolGlyph name="aperture" /></ToolSlot>
            <ToolField>0.00</ToolField>
            <ToolSlot><ToolGlyph name="half" /></ToolSlot>
            <ToolField>1.00</ToolField>
            <ToolSlot $active $ml={1}><ToolGlyph name="on" /></ToolSlot>
            <GammaBox>sRGB gamma</GammaBox>
            <GammaArrow><Arrow $dir="down" $size={5} /></GammaArrow>
          </ViewToolbar>
          <Viewport>
            <BracketModel />
            <HudBlock $x={15} $y={-3}>
              {statsLeft.map(([k, v]) => (
                <HudRow key={k}>
                  <HudCell $w={70}>{k}</HudCell>
                  <HudCell $w={45} $right>{v}</HudCell>
                  <HudCell $w={66} $right>0</HudCell>
                  <HudCell $w={65} $right>0</HudCell>
                </HudRow>
              ))}
            </HudBlock>
            <HudBlock $x={388} $y={17}>
              <HudRow>Viewport 2.0 (OpenGL Core Profile with compatibility)</HudRow>
            </HudBlock>
            <HudBlock $x={854} $y={-3}>
              {statsRight.map(([k, v]) => (
                <HudRow key={k}>
                  <HudCell $w={134}>{k}</HudCell>
                  <HudCell $w={60}>{v}</HudCell>
                </HudRow>
              ))}
            </HudBlock>
            <HudBlock $x={874} $y={467}>
              {statsBottom.map(([k, v]) => (
                <HudRow key={k}>
                  <HudCell $w={115}>{k}</HudCell>
                  <HudCell $w={80}>{v}</HudCell>
                </HudRow>
              ))}
            </HudBlock>
            <CameraName>persp</CameraName>
            <FpsText>36.7 fps</FpsText>
            <Gizmo width="30" height="36" viewBox="0 0 30 36">
              <path d="M12 30V10" stroke="#0c0" strokeWidth="1.200" />
              <path d="M12 30h10" stroke="#e00" strokeWidth="1.200" />
              <path d="M12 30l-5 3" stroke="#22e" strokeWidth="1.200" />
              <text x="10" y="8" fill="#0d0" fontSize="10" fontWeight="700">y</text>
              <text x="23" y="31" fill="#e00" fontSize="10" fontWeight="700">x</text>
              <text x="1" y="33" fill="#22f" fontSize="10" fontWeight="700">z</text>
            </Gizmo>
            <Pointer width="14" height="22" viewBox="0 0 14 22">
              <path d="M1 1v16l4-3.500 3 6.500 3-1.500-3-6h5.500z" fill="#fff" stroke="#111" strokeWidth="1" />
            </Pointer>
          </Viewport>
        </ViewPane>

        <SidePanel>
          <SideTop>
            <svg width="24" height="18" viewBox="0 0 24 18">
              <path d="M6 0l3 4H7v4l5 4H5z" fill="#5fa84f" />
              <path d="M6 6v5" stroke="#ccc" />
              <rect x="0" y="12" width="5" height="5" fill="#3f6fd0" />
              <rect x="9" y="12" width="5" height="5" fill="#d05050" />
              <circle cx="24" cy="8" r="6" fill={TEAL} />
            </svg>
          </SideTop>
          <MenuBar $h={24} $pl={13} $gap={15}>
            <span>Channels</span>
            <span>Edit</span>
            <span>Object</span>
            <span>Show</span>
          </MenuBar>
          <SideDark $h={470} $ml={5} />
          <DragRow $h={6}>
            <DragDots $w={85} $ml={89} />
          </DragRow>
          <SideTabs>
            <PanelTab $w={58} $active>Display</PanelTab>
            <PanelTab $w={47}>Anim</PanelTab>
          </SideTabs>
          <MenuBar $h={21} $pl={15} $gap={16}>
            <span>Layers</span>
            <span>Options</span>
            <span>Help</span>
          </MenuBar>
          <LayerTools>
            <LayerArrow />
            <LayerArrow down />
            <LayerArrow plus />
          </LayerTools>
          <SideDark $h={124} $ml={8} />
          <HScroll $pad={13}>
            <Arrow $dir="left" />
            <HThumb $w={154} />
          </HScroll>
        </SidePanel>
      </Main>

      <TimeRow>
        <Ruler>
          {rulerFrames.map((f) => (
            <RulerCell key={f}>
              <RulerNum>{f}</RulerNum>
              <RulerTick />
            </RulerCell>
          ))}
          <CurrentTime>00:00:01</CurrentTime>
        </Ruler>
        <FrameField>1</FrameField>
        <Transport>
          {transportKinds.map((k) => (
            <TransportSlot key={k}><TransportIcon kind={k} /></TransportSlot>
          ))}
        </Transport>
      </TimeRow>
      <SepBand />

      <RangeRow>
        <RangeField $w={60} $ml={0} />
        <RangeField $w={88} $ml={9}>1</RangeField>
        <RangeTrack>
          <RangeBar>
            <RangeKnob />
            <RangeTime>00:00:00:01</RangeTime>
            <span>00:00:00:00</span>
            <RangeKnob />
          </RangeBar>
        </RangeTrack>
        <RangeField $w={88} $ml={7}>120</RangeField>
        <RangeField $w={88} $ml={8}>200</RangeField>
        <RangeHandle $ml={4} />
        <RangeMark $ml={14} />
        <RangeDrop $w={101} $ml={8}>No Character Set</RangeDrop>
        <RangeMark $ml={11} />
        <RangeDrop $w={100} $ml={8}>No Anim Layer</RangeDrop>
        <RangeHandle $ml={10} />
        <RangeDrop $w={76} $ml={12} $light>24 fps</RangeDrop>
        <RangeDrop $w={19} $ml={0} $light />
        <LoopMark $ml={13} width="18" height="12" viewBox="0 0 18 12" fill="none" stroke="#bbb" strokeWidth="1.500">
          <path d="M1 10V6a2 2 0 012-2h12M12 1l3 3-3 3" />
        </LoopMark>
        <RangeHandle $ml={2} />
      </RangeRow>
    </Page>
  );
}
